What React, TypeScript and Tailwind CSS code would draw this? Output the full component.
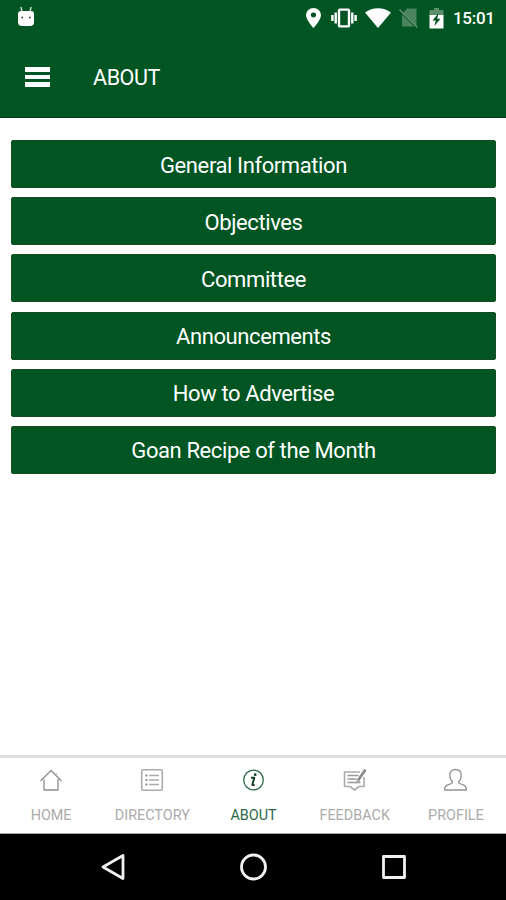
import type { ReactNode } from "react";

const sections = [
  "General Information",
  "Objectives",
  "Committee",
  "Announcements",
  "How to Advertise",
  "Goan Recipe of the Month",
];

function StatusBar() {
  return (
    <div className="flex h-9 items-center justify-between pl-[17px] pr-[11px]">
      <svg className="mt-[-6px] h-[22px] w-[18px]" viewBox="0 0 18 22" fill="#fff">
        <path d="M4 3l1 5M14 3l-1 5" stroke="#c5d6cb" strokeWidth="1.5" />
        <path d="M1 10q0-3 3-3h10q3 0 3 3v8q0 4-4 4H5q-4 0-4-4z" />
        <circle cx="5.2" cy="13.6" r="1" fill="#34503f" />
        <circle cx="12.8" cy="13.6" r="1" fill="#34503f" />
      </svg>
      <div className="flex items-center">
        <svg className="h-5 w-[15px]" viewBox="0 0 14 20" preserveAspectRatio="none" fill="#fff">
          <path fillRule="evenodd" d="M7 0a7 7 0 0 0-7 7c0 5 7 13 7 13s7-8 7-13a7 7 0 0 0-7-7zm0 4.6a2.4 2.4 0 1 1 0 4.8 2.4 2.4 0 0 1 0-4.8z" />
        </svg>
        <svg className="ml-[10px] h-5 w-[26px]" viewBox="0 0 26 20" fill="none" stroke="#fff" strokeWidth="2.4">
          <rect x="8" y="1.6" width="10" height="16.8" rx="1" />
          <path d="M4.7 4.5v11M1.4 7v6M21.3 4.5v11M24.6 7v6" />
        </svg>
        <svg className="ml-[8px] h-5 w-[26px]" viewBox="0 0 26 20" fill="#fff">
          <path d="M0 4.5C7.5-1.2 18.5-1.2 26 4.5L13 20z" />
        </svg>
        <svg className="ml-[8px] h-5 w-5" viewBox="0 0 20 20">
          <path d="M8 .5h9.5v18H3V6z" fill="#4a8560" />
          <path d="M1 3l17 17" stroke="#005522" strokeWidth="2" />
          <path d="M.5 1.5l18 18" stroke="#5b906b" strokeWidth="1.6" />
        </svg>
        <svg className="ml-[10px] h-[21px] w-[15px]" viewBox="0 0 15 21">
          <path d="M5 0h5v2h4.5v6H.5V2H5z" fill="#5b906b" />
          <path d="M.5 7h14v13.5H.5z" fill="#fff" />
          <path d="M9.5 5L3.5 12.5h3.2L5.5 18l6-7.2H8.2z" fill="#005522" />
        </svg>
        <span className="ml-[9px] w-[42px] text-[17px] font-medium leading-5 tracking-[-0.3px]">15:01</span>
      </div>
    </div>
  );
}

function Tab({ label, active, children }: { label: string; active?: boolean; children: ReactNode }) {
  return (
    <button
      className={`flex flex-1 flex-col items-center pt-[10px] ${
        active ? "text-[#2c6847]" : "text-[#ababab]"
      }`}
    >
      <svg
        className="h-6 w-6"
        viewBox="0 0 24 24"
        fill="none"
        stroke="currentColor"
        strokeWidth="1.3"
        strokeLinejoin="round"
      >
        {children}
      </svg>
      <span className="mt-[15px] pl-px text-[14.4px] leading-[17px]">{label}</span>
    </button>
  );
}

export default function App() {
  return (
    <div className="flex h-[900px] w-[506px] flex-col overflow-hidden bg-white font-['Roboto',sans-serif]">
      <header className="h-[118px] border-b border-[#003b14] bg-[#005522] text-white">
        <StatusBar />
        <div className="flex h-[82px] items-center pl-[25px]">
          <div className="flex w-[25px] flex-col gap-[3px]">
            <span className="h-[4.5px] bg-white" />
            <span className="h-[4.5px] bg-white" />
            <span className="h-[4.5px] bg-white" />
          </div>
          <h1 className="ml-[43px] pt-[2px] text-[21.5px] leading-6 tracking-[-0.4px]">ABOUT</h1>
        </div>
      </header>

      <main className="flex flex-1 flex-col gap-[9.2px] pl-[11px] pr-[10px] pt-[22px]">
        {sections.map((section) => (
          <button
            key={section}
            className="h-12 rounded-[2px] border border-[#134d20] bg-[#005522] pt-[3px] text-[22px] leading-6 tracking-[-0.4px] text-white"
          >
            {section}
          </button>
        ))}
      </main>

      <nav className="flex h-[79px] border-b border-t-[3px] border-b-[#a5a5a5] border-t-[#dedede]">
        <Tab label="HOME">
          <path d="M1.5 13L12 2.5 22.5 13M5 11.5V22h14V11" stroke="#8c8c8c" />
          <path d="M17.5 8V5.5" stroke="#b5b5b5" />
        </Tab>
        <Tab label="DIRECTORY">
          <rect x="1.7" y="1.7" width="20.6" height="20.6" rx="1.5" strokeWidth="1.6" />
          <path d="M9 7.5h10M9 12h10M9 16.5h10" />
          <path d="M5.5 7.5h2M5.5 12h2M5.5 16.5h2" stroke="#8c8c8c" strokeWidth="2" />
        </Tab>
        <Tab label="ABOUT" active>
          <circle cx="12.5" cy="12" r="9.8" />
          <path d="M10 9.8h3.3l-2 7.3h2.5" stroke="#173e2a" strokeWidth="1.9" />
          <circle cx="14.2" cy="6.7" r="1.4" fill="#173e2a" stroke="none" />
        </Tab>
        <Tab label="FEEDBACK">
          <path d="M18 4H2.5v14.5H8l4.5 3.5 4.5-3.5h5V9" strokeWidth="1.6" />
          <path d="M5.5 7.5h11M5.5 11h9M5.5 14.5h13" stroke="#999" />
          <path d="M23.5 1.5L16 12.5" stroke="#8c8c8c" strokeWidth="2.8" />
          <path d="M15.5 11l-1.2 4 3.6-2" />
        </Tab>
        <Tab label="PROFILE">
          <path
            d="M9.5 13.8C7.5 12 6.8 9.7 6.8 7.2c0-3.4 2.2-5.7 5.7-5.7s5.7 2.3 5.7 5.7c0 2.5-.7 4.8-2.7 6.6 0 1.8 1.3 2.2 4 2.8 2.6.7 4 2 4 5.4h-22c0-3.4 1.4-4.7 4-5.4 2.7-.6 4-1 4-2.8z"
            stroke="#939393"
          />
        </Tab>
      </nav>

      <footer className="flex h-[66px] items-center justify-between bg-black px-[98px]">
        <svg className="h-[30px] w-[30px]" viewBox="0 0 30 30" fill="none" stroke="#f1f1f1" strokeWidth="2.8" strokeLinejoin="round">
          <path d="M25 3.5v23L5 15z" />
        </svg>
        <svg className="h-[30px] w-[30px]" viewBox="0 0 30 30" fill="none" stroke="#f1f1f1" strokeWidth="2.8">
          <circle cx="15.5" cy="15" r="12" />
        </svg>
        <svg className="h-[30px] w-[30px]" viewBox="0 0 30 30" fill="none" stroke="#f1f1f1" strokeWidth="2.8" strokeLinejoin="round">
          <rect x="5.5" y="4.5" width="21" height="21" />
        </svg>
      </footer>
    </div>
  );
}
